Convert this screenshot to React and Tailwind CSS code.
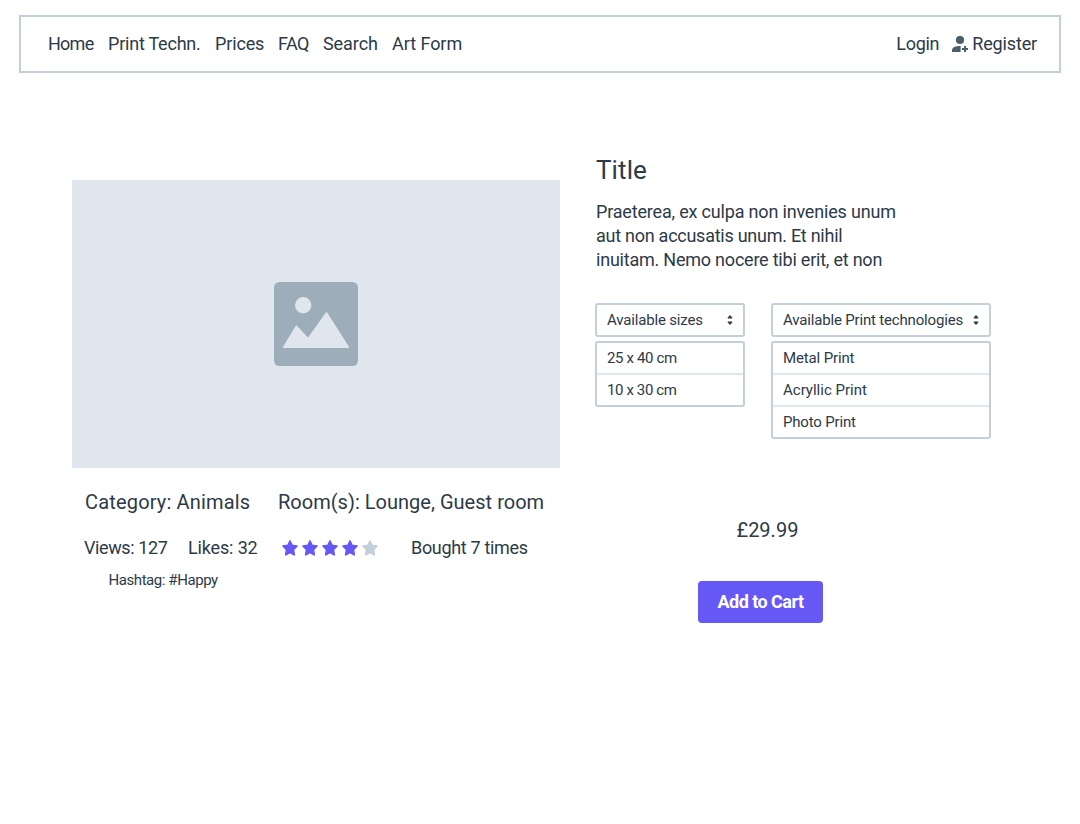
const navItems = [
  { label: "Home", className: "w-[60px] tracking-[-0.75px]" },
  { label: "Print Techn.", className: "w-[107px] tracking-[-0.22px]" },
  { label: "Prices", className: "w-[63px] tracking-[-0.15px]" },
  { label: "FAQ", className: "w-[45px] tracking-[-0.5px]" },
  { label: "Search", className: "w-[69px] tracking-[-0.08px]" },
  { label: "Art Form", className: "tracking-[-0.05px]" },
];

const sizes = [
  { label: "25 x 40 cm", className: "tracking-[-0.35px]" },
  { label: "10 x 30 cm", className: "tracking-[-0.38px]" },
];

const technologies = [
  { label: "Metal Print", className: "tracking-[-0.14px]" },
  { label: "Acryllic Print", className: "" },
  { label: "Photo Print", className: "tracking-[-0.18px]" },
];

function UserPlusIcon() {
  return (
    <svg className="h-4 w-4" viewBox="0 0 16 16" fill="#4b5f6d">
      <circle cx="8" cy="4" r="4.1" />
      <path d="M0 16v-1.8C0 11.6 3.2 10 8 10h.6v6z" />
      <path d="M12 10h2v2h2v2h-2v2h-2v-2h-2v-2h2z" />
    </svg>
  );
}

function PictureIcon() {
  return (
    <svg className="h-[84px] w-[84px]" viewBox="0 0 84 84">
      <rect width="84" height="84" rx="5.5" fill="#9eadba" />
      <g fill="#dfe6ee">
        <circle cx="29.2" cy="23.2" r="8.2" />
        <path
          d="M9.8 65.2 22.3 44.3 34.2 56.8 52.5 30.9 74.3 65.2z"
          stroke="#dfe6ee"
          strokeWidth="1.6"
          strokeLinejoin="round"
        />
      </g>
    </svg>
  );
}

function Star({ filled }) {
  const color = filled ? "#6558f5" : "#c3cfd9";
  return (
    <svg className="h-5 w-5" viewBox="0 0 20 20">
      <path
        d="M10 3 12 7.3 17 8 13.4 11.7 14.3 16.8 10 14.5 5.7 16.8 6.6 11.7 3 8 8 7.3z"
        fill={color}
        stroke={color}
        strokeWidth="1.7"
        strokeLinejoin="round"
      />
    </svg>
  );
}

function SortIcon() {
  return (
    <svg className="h-3 w-[6px]" viewBox="0 0 6 12" fill="#2c3a47" stroke="#2c3a47" strokeWidth="1" strokeLinejoin="round">
      <path d="M3 1.5 5.1 4H.9z" />
      <path d="M3 10.5.9 8h4.2z" />
    </svg>
  );
}

function Select({ label, labelClassName, options, className }) {
  return (
    <div className={`flex flex-col gap-1 text-[15px] leading-[30px] ${className}`}>
      <button className="flex items-center justify-between rounded-[3px] border-2 border-[#c3cfd9] bg-white px-[10px]">
        <span className={`whitespace-nowrap ${labelClassName}`}>{label}</span>
        <SortIcon />
      </button>
      <ul className="divide-y-2 divide-[#dfe6ee] rounded-[3px] border-2 border-[#c3cfd9] bg-white">
        {options.map((option) => (
          <li key={option.label} className={`pl-[10px] ${option.className}`}>
            {option.label}
          </li>
        ))}
      </ul>
    </div>
  );
}

export default function App() {
  return (
    <div className="flex h-[824px] w-[1080px] flex-col bg-white font-['Roboto',sans-serif] text-lg leading-6 text-[#2c3a47]">
      <header className="mx-[19px] mt-[15px] flex h-[58px] items-center justify-between border-2 border-[#c3cfd9] pl-[27px] pr-[22px]">
        <nav className="flex whitespace-nowrap">
          {navItems.map((item) => (
            <a key={item.label} className={item.className}>
              {item.label}
            </a>
          ))}
        </nav>
        <div className="flex items-center whitespace-nowrap">
          <a className="mr-[13px] tracking-[-0.3px]">Login</a>
          <UserPlusIcon />
          <a className="ml-[4px] tracking-[-0.15px]">Register</a>
        </div>
      </header>

      <main className="flex gap-[35px] pl-[72px]">
        <section className="w-[488px] pt-[107px]">
          <div className="flex h-72 items-center justify-center bg-[#dfe6ee]">
            <PictureIcon />
          </div>
          <div className="mt-[22px] flex whitespace-nowrap pl-[13px] text-xl leading-6">
            <span className="w-[193px] tracking-[0.17px]">Category: Animals</span>
            <span className="tracking-[0.02px]">Room(s): Lounge, Guest room</span>
          </div>
          <div className="mt-[22px] flex items-center whitespace-nowrap pl-3">
            <span className="w-[104px] tracking-[-0.4px]">Views: 127</span>
            <span className="w-[92px] tracking-[-0.15px]">Likes: 32</span>
            <div className="mr-[31px] flex">
              {[1, 2, 3, 4, 5].map((n) => (
                <Star key={n} filled={n <= 4} />
              ))}
            </div>
            <span className="tracking-[-0.33px]">Bought 7 times</span>
          </div>
          <p className="mt-2 pl-[36.5px] text-[15px] leading-6 tracking-[-0.43px]">Hashtag: #Happy</p>
        </section>

        <section className="flex flex-col items-start pt-[81px]">
          <h1 className="pl-px text-[26px] leading-8 tracking-[0.1px]">Title</h1>
          <p className="mt-[14px] flex flex-col whitespace-nowrap pl-px">
            <span className="tracking-[-0.18px]">Praeterea, ex culpa non invenies unum</span>
            <span className="tracking-[-0.26px]">aut non accusatis unum. Et nihil</span>
            <span className="tracking-[-0.22px]">inuitam. Nemo nocere tibi erit, et non</span>
          </p>
          <div className="mt-[31px] flex items-start gap-[26px]">
            <Select
              label="Available sizes"
              labelClassName="tracking-[-0.17px]"
              options={sizes}
              className="w-[150px]"
            />
            <Select
              label="Available Print technologies"
              labelClassName="tracking-[-0.17px]"
              options={technologies}
              className="w-[220px]"
            />
          </div>
          <p className="ml-[141.5px] mt-[79px] text-xl leading-6">£29.99</p>
          <button className="ml-[103px] mt-[39px] h-[42px] w-[125px] rounded bg-[#6558f5] font-bold tracking-[-0.53px] text-white">
            Add to Cart
          </button>
        </section>
      </main>
    </div>
  );
}
